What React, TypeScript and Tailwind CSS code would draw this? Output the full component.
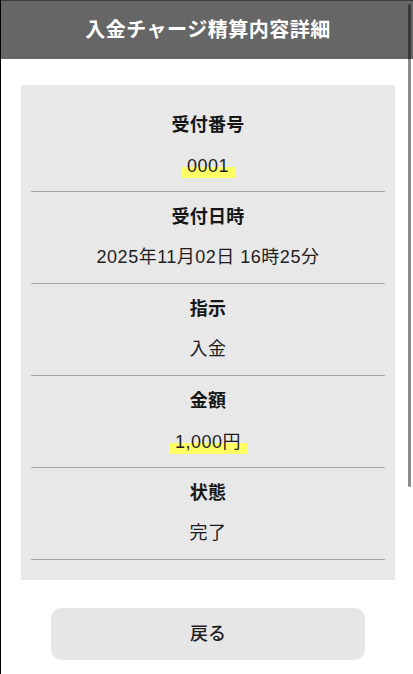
import React from 'react';

type Row = {
  label: string;
  value: string;
  marker?: boolean;
};

const ROWS: Row[] = [
  { label: '受付番号', value: '0001', marker: true },
  { label: '受付日時', value: '2025年11月02日 16時25分' },
  { label: '指示', value: '入金' },
  { label: '金額', value: '1,000円', marker: true },
  { label: '状態', value: '完了' },
];

const font = "font-['Liberation_Sans','Noto_Sans_CJK_JP',sans-serif]";

const DetailRow: React.FC<{ row: Row }> = ({ row }) => (
  <div className="flex flex-col items-center border-b border-[#a6a6a6] pt-[12px] pb-[13px]">
    <div className="text-[18px] leading-[26px] font-bold text-[#161616] tracking-[0.3px]">{row.label}</div>
    <div className="mt-[14px] h-[26px] flex items-center">
      {row.marker ? (
        <span className="inline-block px-[6px] text-[18px] leading-[24px] text-[#1e1e1e] tracking-[0.5px] bg-[linear-gradient(transparent_55%,#ffff66_55%)] translate-y-[1px]">
          {row.value}
        </span>
      ) : (
        <span className="text-[18px] leading-[26px] text-[#1e1e1e] tracking-[0.5px]">{row.value}</span>
      )}
    </div>
  </div>
);

export default function App() {
  return (
    <div className={`relative min-h-screen bg-white border-l border-black ${font}`}>
      <header className="h-[59px] bg-[#666666] border-t border-[#3c3c3c] flex items-center justify-center pl-[2px]">
        <h1 className="text-[20px] font-bold text-white tracking-[0.5px]">入金チャージ精算内容詳細</h1>
      </header>

      <main className="pt-[26px] pb-[14px]">
        <section className="ml-[20px] mr-[18px] bg-[#e8e8e8] px-[10px] pt-[15px] pb-[20px]">
          {ROWS.map(row => (
            <DetailRow key={row.label} row={row} />
          ))}
        </section>

        <div className="ml-[50px] mr-[48px] mt-[28px]">
          <button className="w-full h-[52px] rounded-[10px] bg-[#e6e6e6] text-[18px] font-medium text-[#1e1e1e]">
            戻る
          </button>
        </div>
      </main>

      {/* overlay scrollbar thumb */}
      <div className="absolute right-[2px] top-[4px] w-[3px] h-[483px] rounded-full bg-black/45" />
    </div>
  );
}
